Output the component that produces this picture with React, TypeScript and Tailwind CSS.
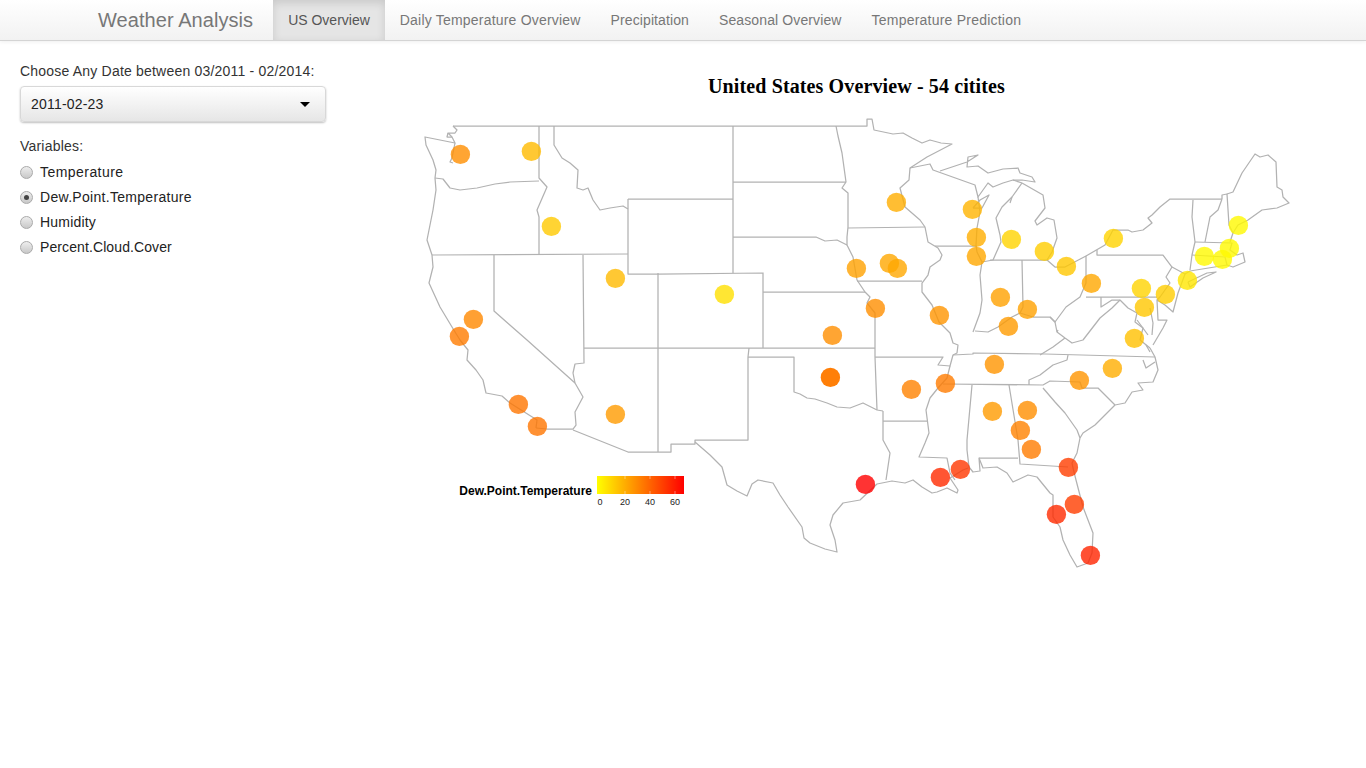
const FONT = { fontFamily: '"Liberation Sans", Arial, sans-serif' };

// tracking per label: the reference's hinted text is not evenly wider
const tabs = [
  { label: "US Overview", cls: "tracking-normal" },
  { label: "Daily Temperature Overview", cls: "tracking-[0.2px]" },
  { label: "Precipitation", cls: "tracking-[0.1px]" },
  { label: "Seasonal Overview", cls: "tracking-[0.12px]" },
  { label: "Temperature Prediction", cls: "tracking-[0.22px]" },
];
const variables = [
  { label: "Temperature", cls: "tracking-[0.45px]" },
  { label: "Dew.Point.Temperature", cls: "tracking-[0.3px]" },
  { label: "Humidity", cls: "tracking-[0.2px]" },
  { label: "Percent.Cloud.Cover", cls: "tracking-[0.1px]" },
];

// state lines, page coordinates
const lines = [
  // north + pacific
  "M453,126 L867,126 L867,119 L872,119 L874,130 L893,134 L903,133 L912,138 L922,143 L930,140 L941,143 L952,144 L927,157 L910,168 L909,180 L900,188 L905,207 L920,220 L925,227 L928,242 L938,248 L942,255 L940,260 L930,267 L928,275 L922,283 L922,292 L932,305 L939,322 L950,333 L953,343 L958,345 L957,353 L953,355 L950,366 L938,365 L943,357 L875,357",
  "M453,126 L457,130 L455,133 L448,133 L452,137 L455,143 L440,140 L425,137 L426,145 L433,160 L436,170 L435,178 L436,190 L433,210 L427,240 L432,255 L433,267 L429,283 L440,307 L452,327 L460,340 L468,350 L467,360 L476,370 L483,380 L486,393 L502,396 L510,403 L537,420 L536,428",
  "M455,143 L452,158 L450,162 L453,163 M448,133 L447,137 L452,137",
  "M435,178 L443,179 L450,188 L460,190 L477,188 L495,184 L510,182 L539,181",
  "M432,255 L628,254",
  "M539,126 L539,178 L547,187 L537,210 L539,217 L539,255",
  "M554,126 L554,145 L562,158 L570,163 L578,170 L577,188 L583,190 L588,188 L593,200 L600,210 L610,208 L623,206 L628,209",
  "M628,199 L733,199 M628,199 L628,274 L658,274 L763,273 L763,348",
  "M733,126 L733,273 M733,182 L846,182 M733,237 L816,237 L825,241 L837,240 L847,245",
  "M836,126 L838,136 L842,153 L846,182 L842,188 L848,193 L848,227 L847,237 L847,245 L853,257 L857,280 L865,292 L870,297 L867,303 L875,313 L875,348",
  "M848,228 L925,227 M857,281 L922,281 M763,292 L865,292",
  "M494,255 L494,311 L527,340 L575,383",
  "M583,255 L584,363 L575,364 L573,373 L575,383 L583,397 L575,412 L576,425 L573,429 L547,429 L536,428",
  "M573,430 L628,452 L671,452 L671,444 L695,444 L695,440 L748,440 L748,357 L749,348",
  "M584,348 L875,348 M658,273 L658,452 M748,357 L794,357 L794,392 L800,394 L807,398 L815,399 L827,403 L837,407 L850,408 L863,403 L877,410 L883,411",
  "M875,348 L875,357 L877,410",
  "M950,366 L947,378 L938,388 L930,398 L926,410 L929,433 L925,443 L919,457 L947,458 L950,473 L955,480",
  "M883,411 L883,440 L890,453 L886,480 M883,421 L927,421",
  // tx coast
  "M695,442 L710,455 L722,467 L727,485 L737,491 L747,496 L752,484 L758,480 L773,483 L780,495 L788,507 L802,527 L804,538 L810,543 L825,549 L837,552 L835,540 L830,525 L833,515 L843,503 L860,500 L877,484 L892,481 L905,483 L913,480 L922,487 L932,493 L937,492 L947,488 L957,493 L958,490 L950,478 L963,470 L968,468",
  // gulf + florida
  "M967,450 L969,467 L973,472 L980,471 L979,458 L983,468 L997,467 L1007,473 L1013,482 L1028,475 L1037,477 L1050,493 L1053,495 L1053,517 L1060,527 L1063,540 L1070,555 L1077,567 L1088,563 L1092,553 L1093,533 L1083,507 L1076,480 L1073,468 L1072,463 L1077,453 L1080,438 L1083,433 L1095,425 L1105,415 L1115,405 L1125,403 L1132,392 L1143,390 L1138,383 L1153,382 L1158,370 L1155,357 L1150,348",
  "M1143,360 L1146,368 L1155,362 M1140,340 L1150,348",
  "M953,355 L973,354 L973,353 L1045,354 L1155,357 M943,384 L1043,385 L1050,381 L1080,382 L1082,388 L1098,388 L1115,405",
  "M1068,355 L1067,360 L1053,365 L1040,375 L1029,380 L1029,385",
  "M972,385 L967,440 L967,450 M1009,385 L1018,440 L1020,464 L1068,467",
  "M979,458 L1018,458",
  "M1043,388 L1055,402 L1065,413 L1077,430 L1080,438",
  // wisconsin + michigan
  "M910,168 L930,164 L933,170 L975,185 L978,197 L988,183 L993,187 L1003,183 L1013,180 L1022,183",
  "M973,208 L982,208 L989,195 L980,200 L973,208",
  "M978,197 L980,212 L977,228 L976,245 L977,252 L982,262 L980,275 L982,300 L980,313 L973,332",
  "M935,246 L977,246",
  "M940,171 L967,162 L978,155 L968,157 L967,167 L978,166 L988,173 L1003,169 L1018,168 L1020,173 L1032,177 L1035,182 L1022,180 L1013,180",
  "M1022,183 L1043,195 L1045,208 L1035,221 L1037,225 L1047,218 L1054,220 L1057,238 L1052,252 L1047,260 L1022,260 L990,260",
  "M1022,183 L1012,197 L1002,207 L996,218 L1000,235 L1001,242 L993,260 L982,262",
  "M1012,197 L1010,203",
  "M1022,260 L1023,307 L1020,313",
  "M975,331 L988,332 L998,327 L1012,317 L1020,313 L1033,317 L1050,317 L1055,322 L1066,307 L1080,297 L1086,283 L1086,256 L1065,267 L1055,267 L1047,260",
  "M1086,256 L1105,245 L1113,230 L1128,230 L1132,232 L1143,230 L1152,223 L1148,218 L1152,215 L1160,207 L1170,199 L1222,199",
  "M1097,250 L1097,255 L1163,255 L1172,267 L1166,277 L1170,283 L1160,297 L1157,300",
  "M1086,297 L1157,297 M1172,267 L1185,274 L1178,293 L1173,312 L1165,305 L1157,300 L1158,320 L1167,320 L1163,328 L1153,345",
  "M1193,200 L1192,217 L1195,242 L1192,255 L1190,270",
  "M1188,282 L1207,273 L1216,272 L1203,278 L1190,287 L1188,282",
  "M1195,242 L1232,243 L1230,250 L1237,255 L1243,253 L1245,262 L1233,267 L1227,265 L1190,271 L1185,274 M1192,255 L1225,257 L1227,265",
  "M1222,199 L1218,210 L1210,217 L1205,242",
  "M1222,199 L1222,195 L1227,194 L1229,225 L1233,233 L1230,242",
  "M1227,194 L1233,192 L1242,173 L1255,154 L1260,157 L1268,155 L1276,162 L1277,187 L1282,190 L1283,197 L1289,203 L1277,208 L1262,210 L1248,220 L1238,225 L1233,233",
  // mid atlantic
  "M1101,297 L1101,307 L1112,300 L1120,300 L1128,308 L1137,313 L1135,322 L1143,328 L1140,340",
  "M1150,308 L1153,323 L1152,335 M1137,320 L1148,335 M1146,345 L1150,352",
  "M1050,317 L1055,322 L1057,332 L1065,338 L1072,343 L1083,340 L1100,318 L1112,308 L1120,300",
  "M1040,355 L1053,347 L1065,338",
  "M1058,330 L1057,332",
];

// x, y, green of the colour as seen on white
const cities: [number, number, number][] = [
  [460, 154, 165], [531, 151, 200], [551, 226, 212], [615, 278, 200], [724, 294, 230], [473, 319, 160],
  [459, 336, 150], [518, 404, 145], [537, 426, 145], [615, 414, 175], [832, 335, 165], [856, 268, 180],
  [889, 263, 185], [897, 268, 185], [875, 308, 165], [896, 202, 190], [972, 209, 195], [976, 237, 190],
  [976, 256, 185], [1011, 239, 220], [1044, 251, 215], [1066, 266, 210], [1113, 238, 220], [1091, 283, 185],
  [1000, 297, 180], [1027, 309, 180], [1008, 326, 175], [939, 315, 170], [1141, 288, 220], [1144, 307, 210],
  [1165, 294, 215], [1187, 280, 235], [1204, 256, 250], [1222, 259, 250], [1229, 248, 250], [1238, 225, 250],
  [1134, 338, 205], [1112, 368, 190], [1079, 380, 170], [994, 364, 170], [945, 383, 150], [911, 389, 155],
  [992, 411, 175], [1027, 410, 165], [1020, 430, 155], [1031, 449, 150], [1068, 467, 100], [1074, 504, 100],
  [1056, 514, 85], [1090, 555, 80], [960, 469, 95], [940, 477, 85], [865, 484, 45],
];

function UsMap() {
  return (
    <svg viewBox="347 110 1019 480" className="block h-[480px] w-[1019px] tracking-normal">
      <defs>
        <linearGradient id="legend">
          <stop offset="0" stopColor="#ffff00" />
          <stop offset="1" stopColor="#ff0000" />
        </linearGradient>
      </defs>
      <g fill="none" stroke="#b2b2b2" strokeWidth="1.25" strokeLinejoin="round">
        {lines.map((d, i) => (
          <path key={i} d={d} />
        ))}
      </g>
      {cities.map(([x, y, g]) => (
        <circle key={`${x}-${y}`} cx={x + 0.4} cy={y + 0.4} r="9.7" fill={`rgb(255,${Math.max(0, (g - 51) / 0.8)},0)`} opacity="0.8" />
      ))}
      <circle cx="830.4" cy="377.4" r="9.7" fill="#ff7f08" />
      <text x="592" y="495" textAnchor="end" fontSize="12" fontWeight="700" fill="#000" style={FONT}>
        Dew.Point.Temperature
      </text>
      <rect x="597" y="476" width="87" height="18" fill="url(#legend)" />
      {[625, 650, 675].map((x) => (
        <path key={x} d={`M${x},476 v3 M${x},491 v3`} stroke="#fff" strokeWidth="0.6" opacity="0.7" />
      ))}
      {[
        ["0", 600],
        ["20", 625],
        ["40", 650],
        ["60", 675],
      ].map(([t, x]) => (
        <text key={t} x={x} y="505" textAnchor="middle" fontSize="9" fill="#222" style={FONT}>
          {t}
        </text>
      ))}
    </svg>
  );
}

export default function App() {
  return (
    <div className="min-h-[768px] bg-white text-[14px] tracking-[0.2px] text-[#333]" style={FONT}>
      <div className="flex h-[41px] border-b border-[#d4d4d4] bg-gradient-to-b from-white to-[#f2f2f2] pl-[78px] shadow-[0_1px_4px_rgba(0,0,0,0.065)]">
        <div className="px-5 pt-[9px] text-[20px] leading-[22px] tracking-[0.06px] text-[#777]">Weather Analysis</div>
        {tabs.map((t, i) =>
          i === 0 ? (
            <div key={t.label} className={`h-[40px] bg-[#e5e5e5] px-[15px] pt-[10px] leading-[20px] text-[#555] shadow-[inset_0_3px_8px_rgba(0,0,0,0.125)] ${t.cls}`}>
              {t.label}
            </div>
          ) : (
            <div key={t.label} className={`px-[15px] pt-[10px] leading-[20px] text-[#777] ${t.cls}`}>
              {t.label}
            </div>
          ),
        )}
      </div>
      <div className="flex">
        <div className="w-[347px] shrink-0 pl-5 pt-5">
          <div className="leading-5">Choose Any Date between 03/2011 - 02/2014:</div>
          <div className="mt-[5px] flex h-9 w-[306px] items-center justify-between rounded border border-[#d8d8d8] bg-gradient-to-b from-white to-[#e6e6e6] pl-[10px] pr-[15px] text-[#222] shadow-[0_1px_2px_rgba(0,0,0,0.25)]">
            <span>2011-02-23</span>
            <svg width="10" height="5" viewBox="0 0 10 5">
              <path d="M0,0 L10,0 L5,5 Z" fill="#000" />
            </svg>
          </div>
          <div className="mt-[14px] leading-5">Variables:</div>
          <div className="mt-1 flex flex-col">
            {variables.map((v, i) => (
              <div key={v.label} className="flex h-[25px] items-center gap-[7px] text-[#222]">
                <div className="flex h-[13px] w-[13px] items-center justify-center rounded-full border border-[#aaa] bg-gradient-to-b from-[#eee] to-[#c8c8c8]">
                  {i === 1 && <div className="h-[5px] w-[5px] rounded-full bg-[#444]" />}
                </div>
                <span className={v.cls}>{v.label}</span>
              </div>
            ))}
          </div>
        </div>
        <div className="flex-1">
          <div className="h-[69px] pt-[33px] text-center text-[20px] font-bold leading-[24px] tracking-[0.12px] text-black" style={{ fontFamily: '"Liberation Serif", "Times New Roman", serif' }}>
            United States Overview - 54 citites
          </div>
          <UsMap />
        </div>
      </div>
    </div>
  );
}
